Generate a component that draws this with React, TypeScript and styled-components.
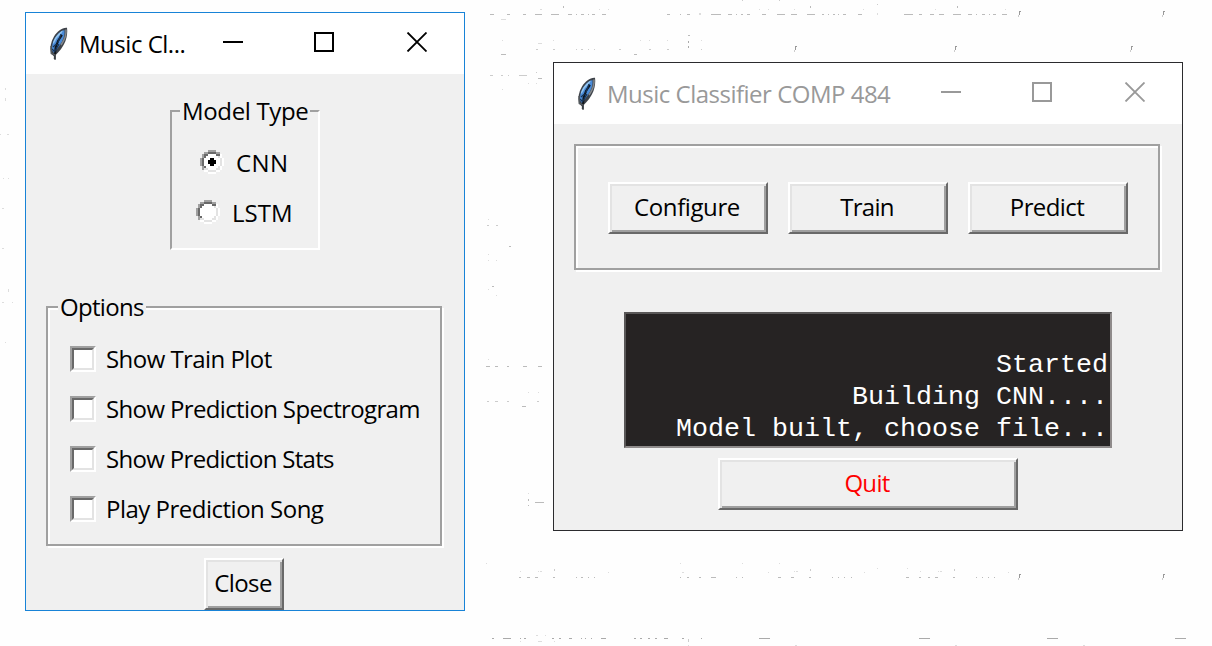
import React, { useState } from "react";
import styled, { createGlobalStyle } from "styled-components";

const GlobalStyle = createGlobalStyle`
  *, *::before { box-sizing: border-box; }
  body { margin: 0; background: #fefefe; overflow: hidden; }
`;

const uiFont = `"Open Sans", "Noto Sans", sans-serif`;

const Desktop = styled.main`
  position: relative;
  width: 1212px;
  height: 646px;
  overflow: hidden;
  background: #fefefe;
  font: 24px/32px ${uiFont};
  color: #000;
`;

const Backdrop = styled.svg`
  position: absolute;
  inset: 0;
`;

const Window = styled.section<{ $x: number; $y: number; $w: number; $h: number; $active?: boolean }>`
  position: absolute;
  left: ${(p) => p.$x}px;
  top: ${(p) => p.$y}px;
  width: ${(p) => p.$w}px;
  height: ${(p) => p.$h}px;
  display: flex;
  flex-direction: column;
  border: 1px solid ${(p) => (p.$active ? "#1883d7" : "#2b2b2e")};
  background: #f0f0f0;
`;

const TitleBar = styled.header<{ $active?: boolean }>`
  display: flex;
  align-items: flex-start;
  height: 61px;
  padding: 14px 37px 0 23px;
  background: #fff;
  color: ${(p) => (p.$active ? "#000" : "#999")};
`;

const Title = styled.h1<{ $spacing: number }>`
  flex: 1;
  margin: 1px 0 0 10px;
  font: 400 24px/32px ${uiFont};
  letter-spacing: ${(p) => p.$spacing}px;
  white-space: nowrap;
`;

const Controls = styled.div`
  display: flex;
  gap: 71px;
  padding-top: 5px;
  svg { display: block; }
`;

const Body = styled.div`
  display: flex;
  flex-direction: column;
  align-items: center;
`;

const ModelGroup = styled.div`
  position: relative;
  width: 150px;
  height: 140px;
  margin-top: 36px;
  padding-top: 34px;
  border: 2px solid;
  border-color: #a0a0a0 #fff #fff #a0a0a0;
`;

const grooved = `
  border: 2px solid #a0a0a0;
  box-shadow: 2px 2px 0 #fff, inset 2px 2px 0 #fff;
`;

const OptionsGroup = styled.div`
  position: relative;
  display: flex;
  flex-direction: column;
  gap: 18px;
  width: 396px;
  height: 240px;
  margin: 56px 2px 12px 0;
  padding: 35px 0 0 22px;
  ${grooved}
`;

const Legend = styled.span<{ $spacing: number; $w: number; $left: number }>`
  position: absolute;
  top: -17px;
  left: ${(p) => p.$left}px;
  width: ${(p) => p.$w}px;
  padding-left: 2px;
  background: #f0f0f0;
  letter-spacing: ${(p) => p.$spacing}px;
  white-space: nowrap;
`;

const RadioRow = styled.label<{ $indent: number }>`
  display: flex;
  align-items: center;
  height: 32px;
  margin-bottom: 18px;
  padding-left: ${(p) => p.$indent}px;
  svg { display: block; margin-right: 12px; }
  span { padding-top: 2px; }
`;

const OptionRow = styled.label`
  display: flex;
  align-items: center;
  height: 32px;
`;

const CheckBox = styled.span`
  width: 26px;
  height: 26px;
  margin-right: 10px;
  border: 2px solid;
  border-color: #a0a0a0 #fff #fff #a0a0a0;
  &::before {
    content: "";
    display: block;
    width: 22px;
    height: 22px;
    border: 2px solid;
    border-color: #696969 #e3e3e3 #e3e3e3 #696969;
    background: #fff;
  }
`;

const Text = styled.span<{ $spacing: number }>`
  letter-spacing: ${(p) => p.$spacing}px;
  white-space: nowrap;
`;

const Button = styled.button<{ $w: number; $color?: string; $spacing: number }>`
  width: ${(p) => p.$w}px;
  height: 52px;
  padding: 0 2px 3px 0;
  border: 2px solid;
  border-color: #fff #696969 #696969 #fff;
  box-shadow: inset 2px 2px 0 #e3e3e3, inset -2px -2px 0 #a0a0a0;
  background: #f0f0f0;
  color: ${(p) => p.$color ?? "#000"};
  font: 24px/32px ${uiFont};
  letter-spacing: ${(p) => p.$spacing}px;
`;

const ButtonFrame = styled.div`
  display: flex;
  justify-content: center;
  gap: 20px;
  width: 586px;
  height: 126px;
  margin: 20px 2px 42px 0;
  padding: 36px 0 0 2px;
  ${grooved}
`;

const Console = styled.pre`
  display: flex;
  flex-direction: column;
  justify-content: flex-end;
  width: 488px;
  height: 136px;
  margin: 0 0 10px;
  padding: 0 2px 1px 0;
  border: 2px solid;
  border-color: #595757 #8f8b8b #8f8b8b #595757;
  background: #262323;
  color: #fff;
  font: 26.67px/32px "Liberation Mono", monospace;
  text-align: right;
`;

const CloseRow = styled.div`
  margin-right: 2px;
  button { display: block; }
`;

const Feather = () => (
  <svg width="20" height="34" viewBox="0 0 20 34">
    <path d="M18 .8C13 .4 8.500 4 5 9.500C1.600 15 .7 21 2 26.500L5 29.500C10 25 14.500 19.500 16.500 14C18 9.500 18.700 5 18 .8Z" fill="#3d4249" />
    <path d="M15.500 3C10 4.500 5.500 10 3.400 17L2.800 23L5 26L10.500 18.500C14.500 13 16 8 15.500 3Z" fill="#4a8bd8" />
    <path d="M14 3.500C9.500 5.500 6 10 4 15.500L4.500 17L8 11L12 7Z" fill="#94c5ef" />
    <path d="M17 2.500C17.600 8 15.500 13 12 18" fill="none" stroke="#85898d" strokeWidth="1.500" />
    <path d="M13 8L9 14L6.500 21L5.800 32" fill="none" stroke="#10151b" strokeWidth="2" />
    <path d="M12 7L8.800 16M7.500 17L4 20M10 17L6 24M3 22L6 25" fill="none" stroke="#173457" strokeWidth="1.300" />
    <path d="M2 19L2.300 26.500L6.200 28L6 33" fill="none" stroke="#555a5e" strokeWidth="1.400" />
  </svg>
);

const WindowControls = () => (
  <Controls>
    <svg width="20" height="20"><path d="M0 10H20" stroke="currentColor" strokeWidth="2" /></svg>
    <svg width="20" height="20"><path d="M1 1H19V19H1Z" fill="none" stroke="currentColor" strokeWidth="2" /></svg>
    <svg width="22" height="20"><path d="M2.500.5L21.500 19.500M21.500.5L2.500 19.500" stroke="currentColor" strokeWidth="1.800" /></svg>
  </Controls>
);

const radioPixels = [
  "....GGGG....",
  "..GGDDDDGG..",
  ".GDDWWWWDDW.",
  ".GDWWWWWWLW.",
  "GDWWWWWWWWLW",
  "GDWWWWWWWWLW",
  "GDWWWWWWWWLW",
  "GDWWWWWWWWLW",
  ".GDWWWWWWLW.",
  ".GLLWWWWLLW.",
  "..WWLLLLWW..",
  "....WWWW....",
];
const radioColors: Record<string, string> = { G: "#a0a0a0", D: "#696969", W: "#ffffff", L: "#e3e3e3" };

const Radio = ({ checked }: { checked: boolean }) => (
  <svg width="24" height="24" viewBox="0 0 12 12" shapeRendering="crispEdges">
    {radioPixels.flatMap((row, y) =>
      [...row].map((c, x) =>
        c === "." ? null : <rect key={`${x}-${y}`} x={x} y={y} width="1" height="1" fill={radioColors[c]} />
      )
    )}
    {checked && <path d="M5 4H7V5H8V7H7V8H5V7H4V5H5Z" fill="#000" />}
  </svg>
);

// Faint marks on the desktop: [y, height, colour, [x, width, x, width, ...]]
const marks: [number, number, string, number[]][] = [
  [14, 1, "#bbb", [490, 4, 507, 3, 523, 3, 535, 7, 551, 8, 568, 4, 576, 1, 581, 3, 588, 1, 592, 3, 602, 4, 667, 3, 680, 1, 687, 3, 711, 10, 728, 4, 736, 1, 741, 2, 747, 3, 762, 4, 777, 8, 791, 6, 807, 8, 822, 2, 828, 1, 833, 2, 838, 1, 843, 3, 858, 4, 904, 9, 919, 3, 930, 4, 939, 5, 953, 8, 968, 4, 976, 1, 982, 3, 989, 1, 993, 3, 1002, 5]],
  [13, 2, "#ddd", [699, 2, 877, 1]],
  [9, 1, "#ddd", [540, 2, 599, 1, 608, 1, 759, 1, 768, 1, 794, 1, 863, 1, 935, 1, 1005, 1]],
  [6, 2, "#bbb", [563, 1, 810, 1, 957, 1]],
  [0, 1, "#ccc", [742, 1, 779, 1]],
  [4, 1, "#ccc", [877, 1]],
  [19, 1, "#ddd", [501, 5]],
  [35, 1, "#bbb", [688, 2]],
  [40, 1, "#ddd", [502, 1, 553, 1, 640, 1, 649, 1, 667, 1, 701, 1]],
  [43, 1, "#ddd", [538, 4]],
  [41, 2, "#aaa", [688, 1]],
  [46, 2, "#aaa", [688, 1]],
  [49, 1, "#ccc", [536, 2, 553, 2, 576, 1, 581, 2, 588, 1, 594, 1, 619, 2, 649, 2, 667, 2, 701, 1]],
  [54, 1, "#bbb", [501, 5, 634, 3]],
  [75, 1, "#ccc", [490, 3, 501, 2, 508, 1, 519, 8]],
  [72, 1, "#ccc", [536, 1]],
  [78, 1, "#bbb", [538, 4]],
  [83, 1, "#ddd", [528, 1, 536, 1]],
  [89, 1, "#ddd", [502, 1]],
  [219, 1, "#ddd", [488, 1]],
  [225, 1, "#ccc", [487, 2, 496, 2]],
  [246, 1, "#bbb", [509, 2]],
  [254, 1, "#ddd", [488, 1]],
  [260, 1, "#ddd", [488, 1, 496, 1]],
  [286, 1, "#bbb", [492, 2]],
  [289, 1, "#ddd", [488, 1]],
  [295, 1, "#ddd", [496, 1]],
  [359, 1, "#ddd", [488, 1]],
  [366, 1, "#bbb", [486, 4, 495, 3, 507, 2, 523, 4, 538, 4]],
  [392, 1, "#ddd", [528, 1, 538, 1]],
  [401, 1, "#ccc", [487, 2, 495, 3, 507, 2, 537, 2]],
  [406, 1, "#bbb", [522, 4]],
  [493, 1, "#ddd", [528, 1]],
  [499, 2, "#bbb", [528, 1]],
  [505, 1, "#bbb", [528, 1]],
  [502, 1, "#bbb", [535, 9]],
  [563, 1, "#ddd", [486, 1, 680, 1, 742, 1, 779, 1]],
  [568, 1, "#ddd", [877, 1, 907, 1]],
  [571, 1, "#ddd", [520, 1, 538, 1, 540, 2, 794, 1, 796, 2, 920, 1, 938, 1, 940, 2]],
  [569, 2, "#ccc", [554, 1, 810, 1, 954, 1]],
  [572, 1, "#ddd", [608, 1, 682, 2, 768, 1, 864, 1, 1008, 1]],
  [577, 1, "#bbb", [519, 2, 527, 3, 535, 3, 553, 2, 576, 1, 581, 2, 588, 1, 594, 1, 680, 1, 687, 2, 699, 2, 711, 5, 736, 1, 742, 1, 778, 3, 791, 3, 809, 2, 832, 1, 838, 1, 844, 1, 851, 1, 906, 3, 919, 2, 928, 2, 935, 3, 953, 2, 976, 1, 982, 1, 988, 1, 994, 1]],
  [635, 1, "#ddd", [536, 2, 545, 1]],
  [638, 1, "#aaa", [492, 2, 503, 8, 520, 1, 524, 2, 552, 2, 559, 2, 569, 3, 581, 1, 585, 1, 591, 1, 601, 5, 634, 2, 640, 2, 648, 2, 655, 2, 664, 4, 682, 2, 701, 1, 759, 11, 919, 11, 1047, 11, 1175, 11]],
  [641, 1, "#ddd", [520, 1, 538, 4, 554, 1]],
  [639, 3, "#ccc", [688, 1]],
  [645, 1, "#ddd", [688, 1, 795, 2, 955, 2, 1083, 2]],
  [88, 2, "#ddd", [5, 1]],
  [98, 3, "#ddd", [5, 1]],
  [134, 1, "#ddd", [0, 1, 7, 2]],
  [178, 1, "#ddd", [3, 1, 8, 1]],
  [208, 1, "#ddd", [2, 2]],
  [248, 1, "#ddd", [2, 2]],
  [289, 3, "#ddd", [8, 1]],
  [302, 1, "#ddd", [2, 2, 12, 1]],
  [342, 1, "#ddd", [5, 1]],
];

const ticks: [number, number][] = [[1017, 11], [1161, 11], [793, 46], [953, 46], [1129, 46], [1017, 574], [1161, 574]];

const DesktopMarks = () => (
  <Backdrop width="1212" height="646" shapeRendering="crispEdges">
    {marks.map(([y, h, color, xs]) =>
      xs.map((x, i) => (i % 2 ? null : <rect key={`${y}-${x}`} x={x} y={y} width={xs[i + 1]} height={h} fill={color} />))
    )}
    {ticks.map(([x, y]) => (
      <g key={`${x}-${y}`}>
        <path d={`M${x + 2} ${y}h2v1h-1v3h-1z`} fill="#999" />
        <path d={`M${x + 1} ${y + 4}h1v2h-1z`} fill="#ccc" />
      </g>
    ))}
  </Backdrop>
);

const options: [string, number][] = [
  ["Show Train Plot", -0.55],
  ["Show Prediction Spectrogram", -0.64],
  ["Show Prediction Stats", -0.68],
  ["Play Prediction Song", -0.5],
];

export default function App() {
  const [model, setModel] = useState("CNN");
  return (
    <Desktop>
      <GlobalStyle />
      <DesktopMarks />
      <Window $x={25} $y={12} $w={440} $h={599} $active>
        <TitleBar $active>
          <Feather />
          <Title $spacing={-0.48}>Music Cl...</Title>
          <WindowControls />
        </TitleBar>
        <Body>
          <ModelGroup>
            <Legend $left={8} $w={130} $spacing={-0.35}>Model Type</Legend>
            <RadioRow $indent={28} onClick={() => setModel("CNN")}>
              <Radio checked={model === "CNN"} />
              <Text $spacing={0.4}>CNN</Text>
            </RadioRow>
            <RadioRow $indent={24} onClick={() => setModel("LSTM")}>
              <Radio checked={model === "LSTM"} />
              <Text $spacing={0}>LSTM</Text>
            </RadioRow>
          </ModelGroup>
          <OptionsGroup>
            <Legend $left={10} $w={88} $spacing={-0.7}>Options</Legend>
            {options.map(([label, spacing]) => (
              <OptionRow key={label}>
                <CheckBox />
                <Text $spacing={spacing}>{label}</Text>
              </OptionRow>
            ))}
          </OptionsGroup>
          <CloseRow>
            <Button $w={80} $spacing={-0.6}>Close</Button>
          </CloseRow>
        </Body>
      </Window>
      <Window $x={553} $y={62} $w={630} $h={469}>
        <TitleBar>
          <Feather />
          <Title $spacing={-0.5}>Music Classifier COMP 484</Title>
          <WindowControls />
        </TitleBar>
        <Body>
          <ButtonFrame>
            <Button $w={160} $spacing={-0.4}>Configure</Button>
            <Button $w={160} $spacing={-0.7}>Train</Button>
            <Button $w={160} $spacing={-0.6}>Predict</Button>
          </ButtonFrame>
          <Console>
            <span>Started</span>
            <span>Building CNN....</span>
            <span>Model built, choose file...</span>
          </Console>
          <Button $w={300} $color="#ff0000" $spacing={-0.7}>Quit</Button>
        </Body>
      </Window>
    </Desktop>
  );
}
